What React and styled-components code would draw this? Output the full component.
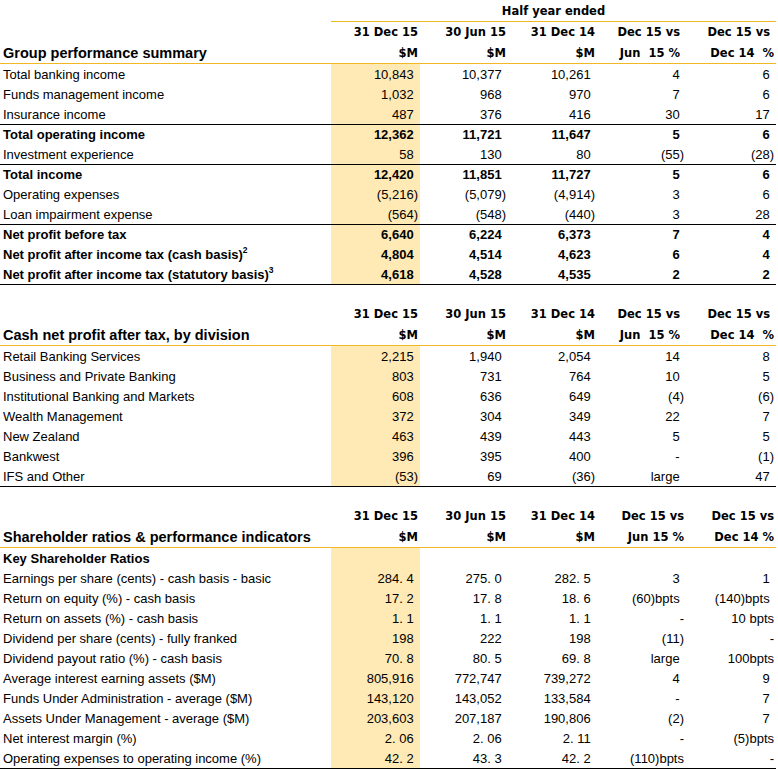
import React from 'react'
import styled, { createGlobalStyle } from 'styled-components'

const GOLD = '#F2B824'
const SHADE = '#FFE9B5'
const COLS = '331px 89px 88px 89px 89px 90px'

const GlobalStyle = createGlobalStyle`
  body {
    margin: 0;
    background: #fff;
    color: #000;
    font-family: "Liberation Sans", Arial, sans-serif;
  }
`

const Sheet = styled.div`
  width: 776px;
`

const Section = styled.section`
  border-bottom: 1px solid #000;
  & + & {
    margin-top: 19px;
  }
`

const HeadRow = styled.div`
  display: grid;
  grid-template-columns: ${COLS};
  box-sizing: border-box;
  height: ${p => (p.$rule || p.$banner ? 22 : 20)}px;
  border-bottom: ${p => (p.$rule ? `1px solid ${GOLD}` : 'none')};
  font-family: "DejaVu Sans", sans-serif;
  font-weight: 700;
  font-size: 11.5px;
  align-items: center;
`

const Banner = styled.div`
  grid-column: 2 / 7;
  align-self: stretch;
  box-sizing: border-box;
  border-bottom: 1px solid ${GOLD};
  display: flex;
  align-items: center;
  justify-content: center;
`

const Title = styled.div`
  padding-left: 3px;
  font-family: "Liberation Sans", Arial, sans-serif;
  font-size: 14.5px;
  font-weight: 700;
  white-space: nowrap;
`

const HeadCell = styled.div`
  text-align: right;
  padding-right: 2px;
  white-space: pre;
`

const Row = styled.div`
  display: grid;
  grid-template-columns: ${COLS};
  box-sizing: border-box;
  height: 20px;
  border-top: ${p => (p.$rule ? '1px solid #000' : 'none')};
  font-size: 13px;
  font-weight: ${p => (p.$bold ? 700 : 400)};
`

const Label = styled.div`
  display: flex;
  align-items: center;
  padding-left: 3px;
  white-space: nowrap;
`

const Sup = styled.sup`
  font-size: 8.5px;
  line-height: 0;
  vertical-align: 6px;
`

const Num = styled.div`
  display: flex;
  align-items: center;
  justify-content: flex-end;
  padding-right: 2px;
  white-space: pre;
  background: ${p => (p.$shade ? SHADE : 'transparent')};
`

const Paren = styled.span`
  visibility: hidden;
`

// "!" marks a value that sits flush right, without the accounting ")" gap
function Value({ v, shade }) {
  if (v == null) return <Num $shade={shade} />
  const tight = v.startsWith('!')
  const text = tight ? v.slice(1) : v
  const pad = !tight && !text.endsWith(')')
  return (
    <Num $shade={shade}>
      {text}
      {pad && <Paren>)</Paren>}
    </Num>
  )
}

function Header({ title, banner, compact }) {
  const jun = compact ? 'Jun 15 %' : 'Jun  15 % '
  const dec = compact ? 'Dec 14 %' : 'Dec 14  %'
  const vs = compact ? 'Dec 15 vs' : 'Dec 15 vs '
  return (
    <>
      {banner && (
        <HeadRow $banner>
          <div />
          <Banner>Half year ended</Banner>
        </HeadRow>
      )}
      <HeadRow>
        <div />
        <HeadCell>31 Dec 15</HeadCell>
        <HeadCell>30 Jun 15</HeadCell>
        <HeadCell>31 Dec 14</HeadCell>
        <HeadCell>{vs}</HeadCell>
        <HeadCell>{vs}</HeadCell>
      </HeadRow>
      <HeadRow $rule>
        <Title>{title}</Title>
        <HeadCell>$M</HeadCell>
        <HeadCell>$M</HeadCell>
        <HeadCell>$M</HeadCell>
        <HeadCell>{jun}</HeadCell>
        <HeadCell>{dec}</HeadCell>
      </HeadRow>
    </>
  )
}

function Table({ title, banner, compact, rows }) {
  return (
    <Section>
      <Header title={title} banner={banner} compact={compact} />
      {rows.map(r => (
        <Row key={r.label} $rule={r.rule} $bold={r.bold}>
          <Label>
            <span>
              {r.label}
              {r.sup && <Sup>{r.sup}</Sup>}
            </span>
          </Label>
          <Value v={r.v[0]} shade />
          <Value v={r.v[1]} />
          <Value v={r.v[2]} />
          <Value v={r.v[3]} />
          <Value v={r.v[4]} />
        </Row>
      ))}
    </Section>
  )
}

const group = [
  { label: 'Total banking income', v: ['10,843', '10,377', '10,261', '4', '6'] },
  { label: 'Funds management income', v: ['1,032', '968', '970', '7', '6'] },
  { label: 'Insurance income', v: ['487', '376', '416', '30', '17'] },
  { label: 'Total operating income', rule: true, bold: true, v: ['12,362', '11,721', '11,647', '5', '6'] },
  { label: 'Investment experience', v: ['58', '130', '80', '(55)', '(28)'] },
  { label: 'Total income', rule: true, bold: true, v: ['12,420', '11,851', '11,727', '5', '6'] },
  { label: 'Operating expenses', v: ['(5,216)', '(5,079)', '(4,914)', '3', '6'] },
  { label: 'Loan impairment expense', v: ['(564)', '(548)', '(440)', '3', '28'] },
  { label: 'Net profit before tax', rule: true, bold: true, v: ['6,640', '6,224', '6,373', '7', '4'] },
  { label: 'Net profit after income tax (cash basis)', sup: '2', bold: true, v: ['4,804', '4,514', '4,623', '6', '4'] },
  { label: 'Net profit after income tax (statutory basis)', sup: '3', bold: true, v: ['4,618', '4,528', '4,535', '2', '2'] },
]

const divisions = [
  { label: 'Retail Banking Services', v: ['2,215', '1,940', '2,054', '14', '8'] },
  { label: 'Business and Private Banking', v: ['803', '731', '764', '10', '5'] },
  { label: 'Institutional Banking and Markets', v: ['608', '636', '649', '(4)', '(6)'] },
  { label: 'Wealth Management', v: ['372', '304', '349', '22', '7'] },
  { label: 'New Zealand', v: ['463', '439', '443', '5', '5'] },
  { label: 'Bankwest', v: ['396', '395', '400', '-', '(1)'] },
  { label: 'IFS and Other', v: ['(53)', '69', '(36)', 'large', '47'] },
]

const ratios = [
  { label: 'Key Shareholder Ratios', bold: true, v: [] },
  { label: 'Earnings per share (cents) - cash basis - basic', v: ['284. 4', '275. 0', '282. 5', '3', '1'] },
  { label: 'Return on equity (%) - cash basis', v: ['17. 2', '17. 8', '18. 6', '(60)bpts', '(140)bpts'] },
  { label: 'Return on assets (%) - cash basis', v: ['1. 1', '1. 1', '1. 1', '!-', '!10 bpts'] },
  { label: 'Dividend per share (cents) - fully franked', v: ['198', '222', '198', '(11)', '!-'] },
  { label: 'Dividend payout ratio (%) - cash basis', v: ['70. 8', '80. 5', '69. 8', 'large', '!100bpts'] },
  { label: 'Average interest earning assets ($M)', v: ['805,916', '772,747', '739,272', '4', '9'] },
  { label: 'Funds Under Administration - average ($M)', v: ['143,120', '143,052', '133,584', '-', '7'] },
  { label: 'Assets Under Management - average ($M)', v: ['203,603', '207,187', '190,806', '(2)', '7'] },
  { label: 'Net interest margin (%)', v: ['2. 06', '2. 06', '2. 11', '!-', '!(5)bpts'] },
  { label: 'Operating expenses to operating income (%)', v: ['42. 2', '43. 3', '42. 2', '!(110)bpts', '!-'] },
]

export default function App() {
  return (
    <>
      <GlobalStyle />
      <Sheet>
        <Table title="Group performance summary" banner rows={group} />
        <Table title="Cash net profit after tax, by division" rows={divisions} />
        <Table title="Shareholder ratios & performance indicators" compact rows={ratios} />
      </Sheet>
    </>
  )
}
